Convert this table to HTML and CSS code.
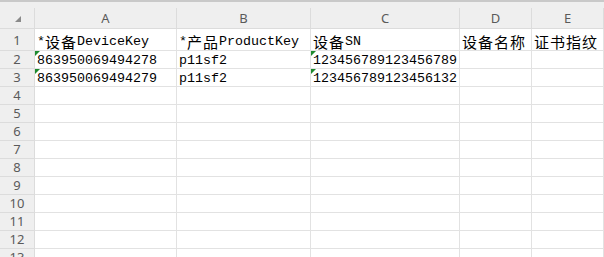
FILE: index.html
```html
<!DOCTYPE html>
<html lang="zh-CN">
<head>
<meta charset="utf-8">
<title>设备导入模板</title>
<link rel="stylesheet" href="styles.css">
</head>
<body>
<div class="sheet">
  <div class="topbar"></div>
  <div class="grid">
    <div class="corner"><span class="corner-mark"></span></div>
    <div class="colhdr">A</div>
    <div class="colhdr">B</div>
    <div class="colhdr">C</div>
    <div class="colhdr">D</div>
    <div class="colhdr">E</div>

    <div class="rowhdr first">1</div>
    <div class="cell first">*<span class="zh">设备</span>DeviceKey</div>
    <div class="cell first">*<span class="zh">产品</span>ProductKey</div>
    <div class="cell first"><span class="zh">设备</span>SN</div>
    <div class="cell first"><span class="zh">设备名称</span></div>
    <div class="cell first"><span class="zh">证书指纹</span></div>

    <div class="rowhdr">2</div>
    <div class="cell txt">863950069494278</div>
    <div class="cell">p11sf2</div>
    <div class="cell txt">123456789123456789</div>
    <div class="cell"></div>
    <div class="cell"></div>

    <div class="rowhdr">3</div>
    <div class="cell txt">863950069494279</div>
    <div class="cell">p11sf2</div>
    <div class="cell txt">123456789123456132</div>
    <div class="cell"></div>
    <div class="cell"></div>

    <div class="rowhdr">4</div><div class="cell"></div><div class="cell"></div><div class="cell"></div><div class="cell"></div><div class="cell"></div>
    <div class="rowhdr">5</div><div class="cell"></div><div class="cell"></div><div class="cell"></div><div class="cell"></div><div class="cell"></div>
    <div class="rowhdr">6</div><div class="cell"></div><div class="cell"></div><div class="cell"></div><div class="cell"></div><div class="cell"></div>
    <div class="rowhdr">7</div><div class="cell"></div><div class="cell"></div><div class="cell"></div><div class="cell"></div><div class="cell"></div>
    <div class="rowhdr">8</div><div class="cell"></div><div class="cell"></div><div class="cell"></div><div class="cell"></div><div class="cell"></div>
    <div class="rowhdr">9</div><div class="cell"></div><div class="cell"></div><div class="cell"></div><div class="cell"></div><div class="cell"></div>
    <div class="rowhdr">10</div><div class="cell"></div><div class="cell"></div><div class="cell"></div><div class="cell"></div><div class="cell"></div>
    <div class="rowhdr">11</div><div class="cell"></div><div class="cell"></div><div class="cell"></div><div class="cell"></div><div class="cell"></div>
    <div class="rowhdr">12</div><div class="cell"></div><div class="cell"></div><div class="cell"></div><div class="cell"></div><div class="cell"></div>
    <div class="rowhdr">13</div><div class="cell"></div><div class="cell"></div><div class="cell"></div><div class="cell"></div><div class="cell"></div>
  </div>
</div>
</body>
</html>
```

FILE: styles.css
```css
* {
  box-sizing: border-box;
}

html, body {
  margin: 0;
  padding: 0;
  background: #ffffff;
  overflow: hidden;
}

.sheet {
  width: 604px;
  height: 257px;
  overflow: hidden;
}

/* strip above the column letters */
.topbar {
  height: 8px;
  background: #efefef;
  border-top: 2px solid #c9c9c9;
}

.grid {
  display: grid;
  grid-template-columns: 35px 142px 134px 149px 72px 72px;
  grid-template-rows: 21px 22px;
  grid-auto-rows: 18px;
}

.corner,
.colhdr,
.rowhdr {
  background: #efefef;
  color: #5a5a5a;
  font-family: "Noto Sans", "Liberation Sans", sans-serif;
  font-size: 13px;
  border-right: 1px solid #dcdcdc;
  border-bottom: 1px solid #dcdcdc;
}

.corner {
  position: relative;
}

/* select-all triangle in the corner */
.corner-mark {
  position: absolute;
  left: 15px;
  top: 8px;
  width: 0;
  height: 0;
  border-left: 6px solid transparent;
  border-bottom: 6px solid #8a8a8a;
}

.colhdr {
  display: flex;
  align-items: center;
  justify-content: center;
  line-height: 1;
  padding-top: 1px;
}

.rowhdr {
  display: flex;
  align-items: flex-end;
  justify-content: center;
  line-height: 1;
  padding-bottom: 2px;
}

.rowhdr.first {
  padding-bottom: 3px;
}

.cell {
  position: relative;
  border-right: 1px solid #e2e2e2;
  border-bottom: 1px solid #e2e2e2;
  font-family: "Liberation Mono", "Noto Sans CJK SC", monospace;
  font-size: 13.33px;
  color: #000000;
  white-space: nowrap;
  padding-left: 2px;
  display: flex;
  align-items: flex-end;
  line-height: 14px;
  padding-bottom: 0;
}

.cell.first {
  padding-bottom: 1px;
}

.zh {
  font-family: "Noto Sans CJK SC", sans-serif;
  font-size: 15px;
  letter-spacing: 1px;
  line-height: 14px;
}

/* number-stored-as-text marker */
.cell.txt::before {
  content: "";
  position: absolute;
  left: 0;
  top: 0;
  width: 0;
  height: 0;
  border-top: 5px solid #1e8a2e;
  border-right: 5px solid transparent;
}
```
